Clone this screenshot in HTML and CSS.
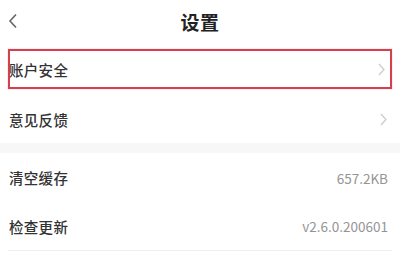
FILE: index.html
```
<!DOCTYPE html>
<html lang="zh">
<head>
<meta charset="utf-8">
<link rel="stylesheet" href="styles.css">
</head>
<body>
<div class="page">
  <header class="header">
    <svg class="back" width="10" height="16" viewBox="0 0 10 16"><path d="M8 1.5 L2 8 L8 14.5" fill="none" stroke="#666" stroke-width="1.6"/></svg>
    <div class="title">设置</div>
  </header>
  <div class="group">
    <div class="row row-first highlight">
      <span class="label">账户安全</span>
      <svg class="chev" width="7" height="13" viewBox="0 0 7 13"><path d="M1 1 L6 6.5 L1 12" fill="none" stroke="#cccccc" stroke-width="1.3"/></svg>
    </div>
    <div class="row row-second">
      <span class="label">意见反馈</span>
      <svg class="chev" width="7" height="13" viewBox="0 0 7 13"><path d="M1 1 L6 6.5 L1 12" fill="none" stroke="#cccccc" stroke-width="1.3"/></svg>
    </div>
  </div>
  <div class="band"></div>
  <div class="group">
    <div class="row row-plain">
      <span class="label">清空缓存</span>
      <span class="value">657.2KB</span>
    </div>
    <div class="row row-plain row-last">
      <span class="label">检查更新</span>
      <span class="value">v2.6.0.200601</span>
    </div>
  </div>
</div>
</body>
</html>
```
FILE: styles.css
```
html, body {
  margin: 0;
  padding: 0;
  background: #ffffff;
}
.page {
  width: 400px;
  height: 256px;
  overflow: hidden;
  font-family: "Noto Sans CJK SC", "Noto Sans", sans-serif;
}
.header {
  position: relative;
  height: 44px;
  display: flex;
  align-items: center;
  justify-content: center;
}
.back {
  position: absolute;
  left: 8px;
  top: 13px;
}
.title {
  font-size: 19px;
  font-weight: 700;
  color: #222;
  letter-spacing: 0.5px;
  margin-top: -2px;
}
.group {
  padding: 0 8px;
}
.row {
  display: flex;
  align-items: center;
  justify-content: space-between;
  box-sizing: border-box;
}
.label {
  font-size: 14.5px;
  font-weight: 500;
  color: #333;
  letter-spacing: 0.3px;
}
.value {
  font-size: 13.5px;
  color: #949494;
}
.row-first {
  margin-top: 5px;
  height: 40px;
}
.highlight {
  border: 2px solid #d6404c;
  box-shadow: 0 0 1px rgba(214, 64, 76, 0.5);
  padding: 0 5px 0 0;
}
.row-second {
  margin-top: 6px;
  height: 48px;
  padding-right: 5px;
  padding-left: 1px;
}
.row-first .label {
  margin-left: -1px;
}
.chev {
  display: block;
}
.band {
  height: 10px;
  background: #f7f7f7;
}
.row-plain {
  height: 49px;
  padding-left: 1px;
  padding-right: 4px;
}
.row-last {
  border-bottom: 1px solid #efefef;
}
```
